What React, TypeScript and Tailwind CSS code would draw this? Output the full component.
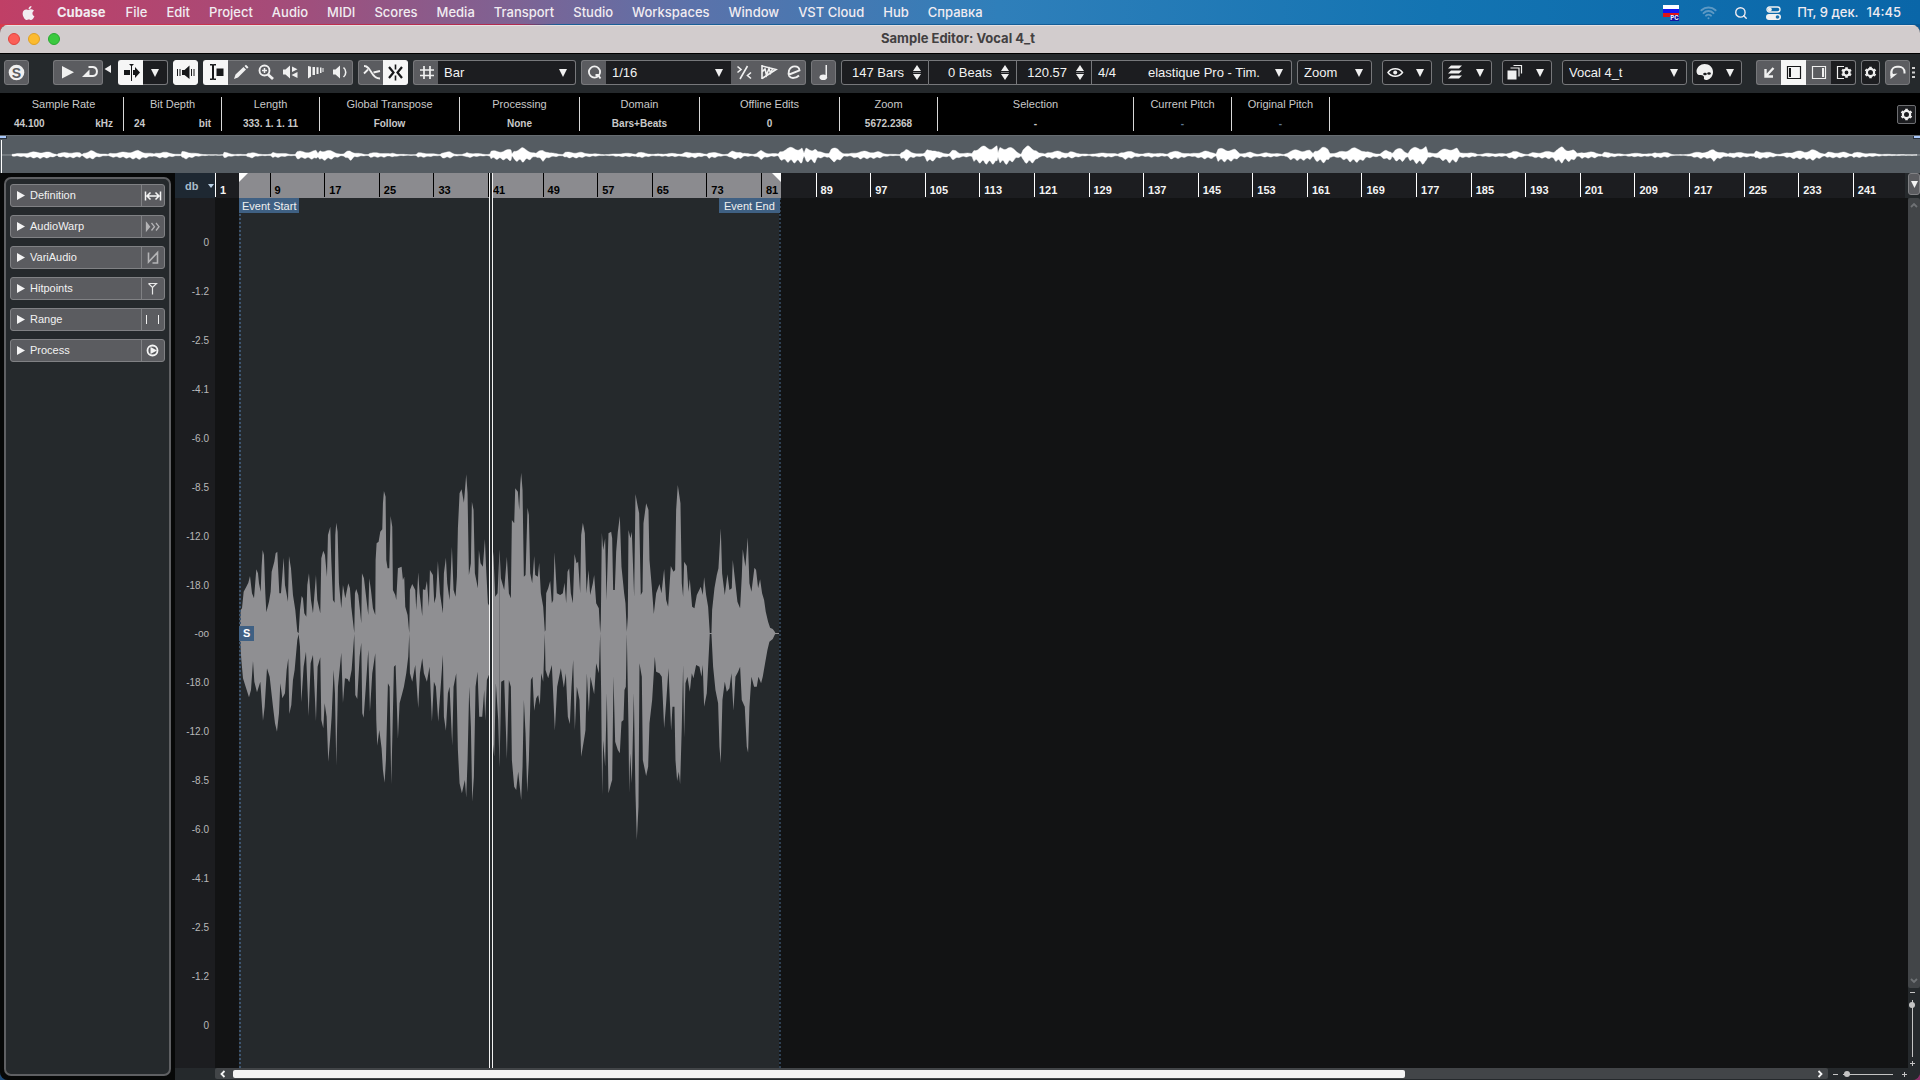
import React from "react";
import { FaApple } from "react-icons/fa";
import { Search, Wifi } from "lucide-react";

const MENU = [
  "File", "Edit", "Project", "Audio", "MIDI", "Scores", "Media", "Transport",
  "Studio", "Workspaces", "Window", "VST Cloud", "Hub", "Справка",
];

const INFO: { label: string; value: string; unit?: string; width: string; dim?: boolean }[] = [
  { label: "Sample Rate", value: "44.100", unit: "kHz", width: "w-[120px]" },
  { label: "Bit Depth", value: "24", unit: "bit", width: "w-[98px]" },
  { label: "Length", value: "333. 1. 1. 11", width: "w-[98px]" },
  { label: "Global Transpose", value: "Follow", width: "w-[140px]" },
  { label: "Processing", value: "None", width: "w-[120px]" },
  { label: "Domain", value: "Bars+Beats", width: "w-[120px]" },
  { label: "Offline Edits", value: "0", width: "w-[140px]" },
  { label: "Zoom", value: "5672.2368", width: "w-[98px]" },
  { label: "Selection", value: "-", width: "w-[196px]" },
  { label: "Current Pitch", value: "-", width: "w-[98px]", dim: true },
  { label: "Original Pitch", value: "-", width: "w-[98px]", dim: true },
];

const DB = ["0", "-1.2", "-2.5", "-4.1", "-6.0", "-8.5", "-12.0", "-18.0", "-oo", "-18.0", "-12.0", "-8.5", "-6.0", "-4.1", "-2.5", "-1.2", "0"];

const BARS = Array.from({ length: 31 }, (_, i) => 1 + i * 8);

/* Overview: x position and half height of the signal */
const OVERVIEW = "12:1 22:1.5 30:2.5 40:3 50:2.5 56:1 57:.3 58:1.5 70:2.7 80:2 82:.5 84:2.5 91:4 97:2 106:.8 108:.5 110:1.7 125:2.7 138:4 146:2.5 152:1.3 154:1 156:2 163:3 170:1.7 178:.8 181:.5 182:3 187:3.5 195:1.5 209:.2 223:.2 224:2.5 232:1 242:.5 246:.5 248:2.5 252:2.5 258:1 268:.5 271:.8 273:2.5 279:2 290:.7 295:.5 297:3.5 305:3 316:4 318:1.5 320:5 326:4.5 332:3.5 341:1 344:1 347:3.5 350:5 355:2 365:.7 368:.6 370:2 384:2 390:1 393:2 397:1 408:.3 416:.4 418:2 424:2 436:.8 440:.6 442:2.7 450:2.7 455:1 462:.5 465:1.2 467:2.5 474:1.5 487:.7 490:1 491:3.5 500:4 511:5 512:1 514:5 522:6.5 530:4 536:1.5 539:3.5 543:5.5 550:2 560:1 563:.7 565:2.5 580:2.7 585:1.5 590:1.5 604:.4 611:.7 620:1.5 633:1.5 636:1 638:2.5 644:2 654:.7 658:1 675:1.5 682:1 685:2.2 695:2.5 704:1 707:1 709:3 716:2 724:.6 728:1 732:3.5 740:3.5 743:1.5 753:1 756:1.5 761:4 768:1.7 778:1 780:4 785:6 794:7 802:7 804:1.5 806:6 812:6 815:7 818:3 826:2 829:2 831:6 838:6 844:1.5 849:1 853:2 860:3.5 875:3 878:3 884:1.5 893:.6 900:.6 901:3 906:5.5 911:2.5 923:1 925:2 927:5.5 931:6.5 937:3 947:1.5 949:1 952:4 956:4 960:2 972:1.5 974:6 985:8 997:8 998:2 1000:7 1008:8.5 1014:5 1021:1 1023:6 1028:8 1036:6 1039:2 1045:1 1048:3 1060:3.5 1068:2 1070:3 1080:1.5 1089:.5 1094:1.5 1110:2 1118:.7 1121:2.5 1126:4 1135:2 1143:1 1150:2 1167:1 1170:3.5 1180:3 1190:1 1195:2 1205:3.5 1213:3 1216:1 1218:5.5 1225:6 1235:5 1240:1.5 1250:2.5 1258:1 1266:2 1276:1.5 1284:.5 1290:4 1300:5 1310:4 1313:1.5 1315:5 1322:7 1328:6 1330:2 1337:2 1340:3 1350:6 1360:6.5 1366:3 1380:1 1386:4.5 1391:4 1392:2 1395:5 1402:6 1408:2 1410:5 1418:8 1426:8 1428:2 1436:2 1440:4 1450:7 1457:6 1460:2 1465:2.5 1475:1.5 1478:.5 1485:1.5 1500:1.5 1506:1 1508:2 1513:4 1520:2 1528:.5 1532:2 1545:3 1554:3.5 1556:6 1562:7 1566:5 1570:6 1573:5.5 1577:1.5 1580:2 1582:3 1595:2.5 1602:.7 1604:2.5 1615:1.5 1625:.5 1630:1.5 1640:1.5 1652:1 1655:2.5 1668:2 1674:.3 1684:.3 1700:3 1708:3 1714:5.5 1720:3 1728:1 1730:2.5 1745:2 1754:1 1756:3.5 1765:3 1778:1 1780:.8 1795:3.5 1805:3.5 1811:5 1818:3.5 1825:1 1828:2.5 1845:2.5 1852:1 1854:2.5 1870:1.5 1885:.7 1905:.3 1918:.3"
  .split(" ")
  .map((p) => p.split(":").map(Number));

/* Fill in the samples between the listed points with a little ripple */
const SAMPLES: [number, number, number][] = [];
for (let i = 0; i < OVERVIEW.length - 1; i++) {
  const [x0, a0] = OVERVIEW[i];
  const [x1, a1] = OVERVIEW[i + 1];
  for (let x = x0; x < x1; x++) {
    const a = a0 + ((a1 - a0) * (x - x0)) / (x1 - x0);
    const up = 0.95 + 0.25 * Math.sin(x * 12.9898);
    const down = 0.95 + 0.25 * Math.sin(x * 7.233 + 1);
    SAMPLES.push([x, a * up, a * down]);
  }
}

const overviewPath =
  "M" + SAMPLES.map(([x, up]) => `${x} ${(19.5 - up).toFixed(1)}`).join("L") +
  "L" + [...SAMPLES].reverse().map(([x, , down]) => `${x} ${(19.5 + down).toFixed(1)}`).join("L") + "Z";

/* Event signal: upper and lower outlines of its two halves */
const TOP_A = "30,520 33,450 37,445 42,395 50,380 56,368 61,348 67,400 73,415 80,328 85,340 88,370 93,395 96,318 99,270 103,285 107,400 110,457 118,425 123,395 126,335 134,305 138,280 143,275 149,400 154,400 162,293 166,375 175,425 178,288 184,325 190,405 197,450 203,515 207,520 211,450 216,408 220,415 224,460 230,470 233,375 238,340 244,420 250,460 259,345 263,420 272,460 275,295 281,272 286,285 292,350 295,225 302,200 305,300 310,420 315,428 317,225 320,188 324,215 328,370 335,445 340,375 347,415 356,370 361,385 365,440 373,510 374,519 376,400 380,387 386,405 391,450 395,490 397,340 403,355 410,415 416,465 419,355 424,390 430,445 437,465 438,300 441,250 447,245 452,215 458,208 460,130 463,93 468,110 470,300 474,325 479,325 483,168 488,200 490,390 497,405 500,420 505,325 516,320 520,360 524,350 527,440 534,465 539,519 541,390 548,372 557,390 560,450 566,337 570,400 578,468 580,388 587,390 592,363 598,440 601,330 610,345 614,430 619,410 625,303 631,400 640,460 643,340 649,293 653,370 660,420 667,260 672,390 678,410 682,350 685,205 690,100 696,88 703,128 707,80 710,43 714,100 718,345 724,310 727,125 732,150 736,340 745,385 748,270 753,310 760,320 766,237 770,330 775,430 780,440 786,440 789,262 792,290 797,410 804,400 810,268";
const BOTTOM_A = "30,520 35,600 40,655 48,680 58,712 64,690 70,603 74,665 82,697 92,665 100,782 105,740 112,625 120,650 130,740 136,790 142,815 148,760 152,670 158,715 166,700 171,630 176,595 179,762 185,735 190,660 195,630 203,540 207,522 211,560 215,727 222,620 229,575 237,768 243,610 250,585 259,783 264,620 272,592 275,780 281,805 285,730 291,770 296,905 302,830 306,770 312,630 316,700 320,917 325,680 335,578 340,728 346,655 354,657 359,667 366,630 372,550 374,522 377,705 383,717 390,590 395,548 398,760 402,773 408,690 416,570 421,755 428,640 437,580 440,780 443,857 449,810 456,865 460,930 465,968 469,900 475,670 480,680 485,973 489,800 493,620 498,615 505,837 510,730 518,700 523,680 530,640 536,590 539,522 541,640 548,665 557,615 566,745 571,640 578,595 583,640 592,665 600,620 607,785 613,665 619,680 626,785 632,700 640,585 643,770 649,812 655,700 660,680 668,857 672,680 680,640 685,870 690,970 697,1000 706,960 710,1013 714,900 719,680 724,800 728,1025 733,950 738,680 744,635 749,770 758,770 764,690 767,783 772,660 780,640 788,670 790,850 794,890 799,670 806,780 810,923";
const TOP_B = "0,268 4,355 14,390 22,290 28,400 34,415 37,180 44,190 47,85 55,95 59,150 62,75 65,38 69,90 73,350 78,345 84,143 88,165 92,340 98,370 104,288 107,345 115,350 119,308 124,400 131,440 136,515 138,510 140,400 146,385 152,363 157,430 161,420 165,277 172,400 182,405 190,400 195,368 200,430 204,335 209,325 214,400 220,430 225,282 231,310 236,305 242,400 245,225 250,188 256,220 261,400 267,330 272,405 280,370 284,345 290,430 298,445 302,519 304,480 307,218 311,270 317,235 321,420 327,220 335,215 338,235 341,390 346,390 350,275 355,215 361,168 366,320 374,400 378,430 382,515 385,470 387,210 393,235 397,215 404,410 408,102 414,135 419,160 424,405 429,395 432,190 440,130 447,150 450,300 457,380 463,462 470,400 480,372 486,400 494,327 500,420 506,440 514,318 522,335 527,330 530,150 535,75 543,130 547,370 551,410 554,305 562,318 567,395 571,357 578,440 585,445 592,405 604,380 610,405 614,352 620,405 626,440 631,519 636,519 638,450 645,385 652,345 657,325 664,205 668,340 676,405 684,343 690,390 697,385 700,300 709,380 714,425 722,445 727,350 730,268 738,320 745,232 750,370 756,395 765,323 770,330 776,385 782,358 788,400 794,420 799,455 806,485 812,503 820,507 826,515 828,519 843,519";
const BOTTOM_B = "0,923 5,665 14,660 22,897 28,660 34,680 37,900 44,980 50,990 56,935 65,1020 69,920 73,720 78,820 83,997 88,900 94,660 99,650 104,752 110,715 116,705 121,735 125,640 131,665 136,522 138,630 146,655 157,615 166,812 173,680 184,625 193,683 199,640 205,770 211,792 216,680 221,600 226,810 232,680 240,720 245,890 255,830 258,810 262,640 268,757 273,650 284,703 290,610 298,640 302,522 305,700 308,1005 311,840 317,920 322,700 327,1000 335,970 338,960 342,650 347,845 355,870 361,880 366,785 372,780 375,690 379,680 382,522 387,800 389,1000 392,880 397,970 403,700 408,1000 412,1140 417,1040 420,610 427,650 430,900 440,948 446,920 450,790 458,720 466,590 470,635 480,640 487,650 494,805 500,730 507,625 515,812 519,740 525,740 528,900 533,963 538,935 542,973 547,800 551,615 554,835 558,670 564,650 571,695 577,640 582,655 590,615 600,620 606,650 610,615 614,740 622,700 627,600 631,522 636,522 641,620 648,690 656,730 660,860 664,910 669,720 676,665 682,695 690,685 696,640 702,752 708,650 716,635 722,620 727,720 736,740 742,860 746,878 750,740 756,650 764,680 772,680 777,650 785,670 790,650 797,610 804,570 810,545 820,537 826,524 828,522 843,522";

const outline = (top: string, bottom: string) => `${top} ${bottom.split(" ").reverse().join(" ")}`;

/* ---------- toolbar parts ---------- */

function Icon({ children }: { children: React.ReactNode }) {
  return (
    <svg viewBox="0 0 25 25" width="25" height="25" className="shrink-0" fill="currentColor" stroke="none" aria-hidden="true">
      {children}
    </svg>
  );
}

type Tone = "gray" | "white" | "dark";
const TONE: Record<Tone, string> = {
  gray: "bg-[#5b5c60] border-[#77787b] text-[#f0f0f0]",
  white: "bg-[#f6f6f6] border-[#f6f6f6] text-[#17181a]",
  dark: "bg-[#1c1d20] border-[#77787b] text-[#f0f0f0]",
};

function Tool({ label, tone = "gray", narrow, children }: { label: string; tone?: Tone; narrow?: boolean; children: React.ReactNode }) {
  return (
    <button
      type="button"
      aria-label={label}
      className={`${TONE[tone]} ${narrow ? "w-[19px]" : "w-[25px]"} flex h-[25px] shrink-0 items-center justify-center overflow-hidden border-y first:rounded-l-[3px] first:border-l last:rounded-r-[3px] last:border-r`}
    >
      {children}
    </button>
  );
}

function Group({ children, className = "" }: { children: React.ReactNode; className?: string }) {
  return <div className={`flex shrink-0 ${className}`}>{children}</div>;
}

function Down() {
  return (
    <svg viewBox="0 0 8 8" width="8" height="8" fill="#f0f0f0" className="pointer-events-none shrink-0" aria-hidden="true">
      <path d="M0 0H8L4 8Z" />
    </svg>
  );
}

function Drop({ label, value, className }: { label: string; value: string; className: string }) {
  return (
    <label className={`${className} flex h-[25px] shrink-0 items-center border-y border-[#77787b] bg-[#1c1d20] pr-2 pl-[6px] first:rounded-l-[3px] first:border-l last:rounded-r-[3px] last:border-r`}>
      <select aria-label={label} className="min-w-0 flex-1 appearance-none bg-transparent text-[13px] text-[#f2f2f2] outline-none">
        <option>{value}</option>
      </select>
      <Down />
    </label>
  );
}

function Stepper({ label, value, className }: { label: string; value: string; className: string }) {
  return (
    <div className={`${className} flex h-[25px] shrink-0 items-center gap-[9px] border-y border-r border-[#77787b] bg-[#1c1d20] pr-[7px] first:rounded-l-[3px] first:border-l`}>
      <input aria-label={label} defaultValue={value} className="min-w-0 flex-1 bg-transparent text-right text-[13px] text-[#f2f2f2] outline-none" />
      <div className="flex w-2 flex-col gap-px">
        <button type="button" aria-label={`${label} up`} className="h-[6px]">
          <svg viewBox="0 0 8 6" width="8" height="6" fill="#f0f0f0"><path d="M4 0L8 6H0Z" /></svg>
        </button>
        <span className="h-px bg-[#77787b]" />
        <button type="button" aria-label={`${label} down`} className="h-[6px]">
          <svg viewBox="0 0 8 6" width="8" height="6" fill="#f0f0f0"><path d="M0 0H8L4 6Z" /></svg>
        </button>
      </div>
    </div>
  );
}

function Gear({ cx, cy, r = 3.6 }: { cx: number; cy: number; r?: number }) {
  return (
    <g fill="none" stroke="currentColor">
      <circle cx={cx} cy={cy} r={r} strokeWidth="2.2" />
      {[30, 90, 150, 210, 270, 330].map((a) => (
        <path key={a} d={`M${cx + r + 0.6} ${cy}h1.6`} strokeWidth="2.6" transform={`rotate(${a} ${cx} ${cy})`} />
      ))}
    </g>
  );
}

const Speaker = () => <path d="M5 9.5H7.5L12 5.5V18.5L7.5 14.5H5Z" />;

function MenuButton({ label, children, className = "" }: { label: string; children: React.ReactNode; className?: string }) {
  return (
    <Group className={className}>
      <button type="button" aria-label={label} className="flex h-[25px] w-[50px] items-center justify-between overflow-hidden rounded-[3px] border border-[#77787b] bg-[#1c1d20] pr-[7px] text-[#f0f0f0]">
        {children}
        <Down />
      </button>
    </Group>
  );
}

function Toolbar() {
  return (
    <div className="flex h-[39px] shrink-0 items-center gap-[5px] overflow-hidden bg-[#25292c] pb-[2px] pl-1">
      <Group>
        <Tool label="Solo editor">
          <Icon>
            <circle cx="12.5" cy="12.5" r="7.8" />
            <text x="12.5" y="17.5" textAnchor="middle" fontSize="14" fontWeight="700" fill="#5b5c60">S</text>
          </Icon>
        </Tool>
      </Group>
      <Group className="ml-[19px]">
        <Group>
          <Tool label="Audition"><Icon><path d="M8 6L20 12.3L8 18.6Z" /></Icon></Tool>
          <Tool label="Audition loop">
            <Icon>
              <path d="M8 16H15A4.6 4.6 0 0 0 15 6.9H10.5" fill="none" stroke="currentColor" strokeWidth="2" />
              <path d="M4 17L11.5 9.5V17Z" />
            </Icon>
          </Tool>
        </Group>
        <svg viewBox="0 0 10 25" width="10" height="25" fill="#f0f0f0" aria-hidden="true"><path d="M8 5V13L1.5 9Z" /></svg>
      </Group>
      <Group>
        <Tool label="Auto-scroll" tone="white">
          <Icon>
            <path d="M5 10H11V15H5ZM14 10H16V7L21 12.5L16 18V15H14ZM12 6L10 4H15L13 6V21H12Z" />
          </Icon>
        </Tool>
        <Tool label="Auto-scroll settings" tone="dark"><Down /></Tool>
      </Group>
      <Group>
        <Tool label="Acoustic feedback" tone="white">
          <Icon>
            <path d="M4 9H5V16H4ZM6.5 9H7.5V16H6.5ZM9 10H11.5L16.5 5.5V19L11.5 15H9ZM18 9H19V16H18ZM20.5 9H21.5V16H20.5Z" />
          </Icon>
        </Tool>
      </Group>
      <Group>
        <Tool label="Range selection" tone="white">
          <Icon>
            <path d="M6 4H8.5L9 4.6L9.5 4H12V5.5H10V18.5H12V20H9.5L9 19.4L8.5 20H6V18.5H8V5.5H6ZM12.5 8.5H19.5V16H12.5Z" />
          </Icon>
        </Tool>
        <Tool label="Draw"><Icon><path d="M6 19L7.5 14.5L15.5 7L18 9.5L10 17.5ZM16.5 6L18 4.8L20.5 7.2L19 8.7Z" /></Icon></Tool>
        <Tool label="Zoom">
          <Icon>
            <g fill="none" stroke="currentColor" strokeWidth="1.9">
              <circle cx="11.5" cy="10.5" r="5" />
              <path d="M9 10.5H14M11.5 8V13" strokeWidth="1.5" />
              <path d="M15 14.5L20 19" strokeWidth="2.8" />
            </g>
          </Icon>
        </Tool>
        <Tool label="Play"><Icon><Speaker /><path d="M14 6.5L19.5 9.2L14 12ZM19.5 12V18L13.5 15Z" /></Icon></Tool>
        <Tool label="Scrub"><Icon><path d="M5 6L8 6.7V16.5L5 18.5ZM9.5 7H12V15H9.5ZM13.5 7.2H15.5V14H13.5ZM17 7.5H18.5V13H17ZM19.5 8H20.5V12H19.5Z" /></Icon></Tool>
        <Tool label="Time warp">
          <Icon><Speaker /><path d="M15.5 7.5C18.5 10 18.5 14.5 15.5 17" fill="none" stroke="currentColor" strokeWidth="1.6" /></Icon>
        </Tool>
      </Group>
      <Group>
        <Tool label="Snap to zero crossing">
          <Icon>
            <g fill="none" stroke="currentColor" strokeWidth="1.8">
              <path d="M5 6C9 6 10.5 9 12.5 12.5S17 18.5 21 18.5" />
              <path d="M5 13.5L9 9.5M21 11L14.5 12.5" />
            </g>
          </Icon>
        </Tool>
        <Tool label="Snap on" tone="white">
          <Icon>
            <g fill="none" stroke="currentColor" strokeWidth="2.2">
              <path d="M6 7L10.5 12.5L6 18M19 7L14.5 12.5L19 18" />
              <path d="M12.5 4.5V9.5M12.5 15.5V20.5" strokeWidth="1.6" />
            </g>
          </Icon>
        </Tool>
      </Group>
      <Group>
        <Tool label="Grid"><Icon><path d="M10 6V19M16 6V19M6 10H20M6 15.5H20" fill="none" stroke="currentColor" strokeWidth="1.7" /></Icon></Tool>
        <Drop label="Grid type" value="Bar" className="w-[138px]" />
      </Group>
      <Group>
        <Tool label="Quantize">
          <Icon><g fill="none" stroke="currentColor" strokeWidth="1.8"><circle cx="12.5" cy="12" r="5.6" /><path d="M13.5 15H16L18.5 18.5" /></g></Icon>
        </Tool>
        <Drop label="Quantize preset" value="1/16" className="w-[125px]" />
        <Tool label="Soft quantize">
          <Icon><g fill="none" stroke="currentColor" strokeWidth="1.6"><path d="M16.5 6L9 19M6.5 6.5L10 9.5L6.5 12.5M20 12.5L16.5 15.5L20 18.5" /></g></Icon>
        </Tool>
        <Tool label="Audio quantize">
          <Icon>
            <path d="M6 6L20 9.5L6 18.5" fill="none" stroke="currentColor" strokeWidth="1.6" />
            <path d="M6 5V19M6 12L9 9L10.5 15L13 8.5L14.5 13L16.5 9" fill="none" stroke="currentColor" strokeWidth="1.6" />
          </Icon>
        </Tool>
        <Tool label="Quantize panel">
          <Icon><path d="M7 15L18.5 10.5C18 5 10 5 8 10.5C6.500 16 9 18 12 18S16.5 17 18 15.5" fill="none" stroke="currentColor" strokeWidth="1.9" /></Icon>
        </Tool>
      </Group>
      <Group>
        <Tool label="Musical mode"><Icon><ellipse cx="12.3" cy="17.2" rx="3.8" ry="2.8" /><path d="M14.5 5H16V17.5H14.5Z" /></Icon></Tool>
      </Group>
      <Group>
        <Stepper label="Bars" value="147 Bars" className="w-[88px]" />
        <Stepper label="Beats" value="0 Beats" className="w-[88px]" />
        <Stepper label="Tempo" value="120.57" className="w-[75px]" />
        <div className="flex h-[25px] w-[50px] items-center border-y border-[#77787b] bg-[#1c1d20] pl-[6px]">
          <input aria-label="Time signature" defaultValue="4/4" className="w-full bg-transparent text-[13px] text-[#f2f2f2] outline-none" />
        </div>
        <Drop label="Algorithm" value="elastique Pro - Tim." className="w-[150px]" />
      </Group>
      <Group><Drop label="Zoom preset" value="Zoom" className="w-[75px]" /></Group>
      <MenuButton label="Show info" className="ml-[5px]">
        <Icon>
          <path d="M5 12.5C8.500 7.500 16 7.500 19.500 12.500C16 17.500 8.500 17.500 5 12.500Z" fill="none" stroke="currentColor" strokeWidth="1.5" />
          <circle cx="12.200" cy="12.500" r="2" />
        </Icon>
      </MenuButton>
      <MenuButton label="Layers" className="ml-[5px]">
        <Icon><path d="M8 5.500H19L16 8.500H5ZM8 10.500H19L16 13.500H5ZM8 15.500H19L16 18.500H5Z" /></Icon>
      </MenuButton>
      <MenuButton label="Part borders" className="ml-[5px]">
        <Icon>
          <path d="M4.500 10.500H13.500V19.500H4.500Z" />
          <path d="M7.500 8H16V16.500M10.500 5.500H18.500V13.500" fill="none" stroke="currentColor" strokeWidth="1.200" />
        </Icon>
      </MenuButton>
      <Group className="ml-[5px]"><Drop label="Edited event" value="Vocal 4_t" className="w-[125px]" /></Group>
      <MenuButton label="Colours">
        <Icon>
          <path d="M11.500 4C16.500 4 20 7.500 20 12C20 16 17.500 19 14 20C11.500 20.500 10.500 19 11 17.500C11.500 16 9 14.500 7 15C4.500 15.500 3.500 13 3.500 11C4 7 7.500 4 11.500 4Z" />
          <ellipse cx="12" cy="14" rx="1.800" ry="1.300" fill="#1c1d20" />
          <ellipse cx="16" cy="13.500" rx="1.800" ry="1.300" fill="#1c1d20" />
        </Icon>
      </MenuButton>
      <Group className="ml-auto">
        <Tool label="Open in lower zone"><Icon><path d="M16.500 8L9.500 15.500M8.500 9V16.500H16" fill="none" stroke="currentColor" strokeWidth="2.400" /></Icon></Tool>
        <Tool label="Left zone" tone="white"><Icon><path d="M6.500 6.500H19.500V18.500H6.500Z" fill="none" stroke="currentColor" strokeWidth="1.200" /><path d="M8 8H10V17H8Z" /></Icon></Tool>
        <Tool label="Right zone"><Icon><path d="M6.500 6.500H19.500V18.500H6.500Z" fill="none" stroke="currentColor" strokeWidth="1.200" /><path d="M16 8H18V17H16Z" /></Icon></Tool>
        <Tool label="Window layout" tone="dark">
          <Icon><path d="M13 6.500H6.500V18.500H13" fill="none" stroke="currentColor" strokeWidth="1.200" /><Gear cx={15.500} cy={12.500} r={3} /></Icon>
        </Tool>
      </Group>
      <Group><Tool label="Toolbar setup" tone="dark" narrow><Icon><Gear cx={12.500} cy={12.500} /></Icon></Tool></Group>
      <Group>
        <Group>
          <Tool label="Retrospective">
            <Icon>
              <path d="M6.500 16V12A5.500 5.500 0 0 1 12 6.700H14A5.500 5.500 0 0 1 19.500 12V13.500" fill="none" stroke="currentColor" strokeWidth="2" />
              <path d="M5.500 11V19L12.500 13.500L8 14Z" />
            </Icon>
          </Tool>
        </Group>
        <svg viewBox="0 0 10 25" width="10" height="25" fill="#d0d0d0" aria-hidden="true">
          <path d="M2 7H5V9H2ZM2 11.500H5V13.500H2ZM2 16H5V18H2Z" />
        </svg>
      </Group>
    </div>
  );
}

/* ---------- inspector ---------- */

const SECTIONS: { name: string; icon: React.ReactNode }[] = [
  { name: "Definition", icon: <path d="M1.500 3.500V12.500M16.500 3.500V12.500M3 8H15M6.500 4.500L3 8L6.500 11.500M11.500 4.500L15 8L11.500 11.500" fill="none" stroke="#f4f4f4" strokeWidth="1.500" /> },
  { name: "AudioWarp", icon: <g stroke="#b4b4b6" fill="none" strokeWidth="1.300"><path d="M2.500 4L5.500 7.700L2.500 11.500Z" fill="#b4b4b6" /><path d="M7.500 4L10.500 7.700L7.500 11.500M12 4L15 7.700L12 11.500" /></g> },
  { name: "VariAudio", icon: <path d="M4.500 2.500V12L13.500 2.500V13H8.500" stroke="#b4b4b6" fill="none" strokeWidth="1.600" /> },
  { name: "Hitpoints", icon: <path d="M4.500 2.500H12.500L8.500 6.500L4.500 2.500M8.500 6.500V13.500" fill="none" stroke="#e8e8e8" strokeWidth="1.200" /> },
  { name: "Range", icon: <path d="M2 3H3V12H2ZM14 3H15V12H14Z" fill="#f0f0f0" /> },
  { name: "Process", icon: <g fill="none" stroke="#f4f4f4"><circle cx="8.500" cy="7.500" r="5" strokeWidth="1.800" /><path d="M6.500 4L13 7.500L6.500 11Z" fill="#f4f4f4" stroke="none" /></g> },
];

function Inspector() {
  return (
    <aside className="flex w-[175px] shrink-0 flex-col bg-[#070808] p-1">
      <div className="flex flex-1 flex-col gap-2 rounded-[7px] border-2 border-[#5f6063] bg-[#25292c] px-1 pt-[5px]">
        {SECTIONS.map((s) => (
          <button key={s.name} type="button" className="flex h-[23px] shrink-0 items-center rounded-[3px] border border-[#808184] bg-[#5b5c60] pl-[6px] text-left text-[11px] text-[#f2f2f2]">
            <svg viewBox="0 0 8 9" width="8" height="9" fill="#f4f4f4" aria-hidden="true"><path d="M0 0L8 4.500L0 9Z" /></svg>
            <span className="flex-1 pl-[5px]">{s.name}</span>
            <span className="flex h-full w-[23px] items-center justify-center border-l border-[#808184]">
              <svg viewBox="0 0 18 15" width="18" height="15" aria-hidden="true">{s.icon}</svg>
            </span>
          </button>
        ))}
      </div>
    </aside>
  );
}

/* ---------- editor ---------- */

function Timeline() {
  return (
    <div className="relative flex min-w-0 flex-1 flex-col">
      <div className="relative h-[25px] shrink-0 bg-[#25292c] pr-[3px]">
        <div className="relative h-full bg-[#1c1d20]">
          <div className="absolute inset-y-0 left-[1.42%] flex w-[32.06%] justify-between bg-[#8b8b8f]">
            <svg viewBox="0 0 9 9" width="9" height="9" fill="#fff"><path d="M0 0H9L0 9Z" /></svg>
            <svg viewBox="0 0 9 9" width="9" height="9" fill="#fff"><path d="M0 0H9V9Z" /></svg>
          </div>
          <div className="relative flex h-6 text-[11px] font-bold">
            {BARS.map((b, i) => (
              <div
                key={b}
                className={`${i > 0 && i < 11 ? "border-black text-black" : "border-white text-[#f4f4f4]"} ${i === 30 ? "grow-[0.95]" : "grow"} flex min-w-0 basis-0 items-end overflow-hidden border-l pl-1 leading-[14px]`}
              >
                {b}
              </div>
            ))}
          </div>
        </div>
      </div>
      <div className="relative min-h-0 flex-1 bg-[#121314]">
        <div className="absolute inset-y-0 left-[1.42%] w-[32%] bg-[#25292c]">
          <svg viewBox="0 -786 1626 2610" preserveAspectRatio="none" className="absolute inset-0 h-full w-full" fill="#8f8f92" aria-label="Vocal 4_t waveform">
            <polygon points={outline(TOP_A, BOTTOM_A)} transform="translate(-28 0)" />
            <polygon points={outline(TOP_B, BOTTOM_B)} transform="translate(782 0)" />
          </svg>
          <div className="absolute inset-y-0 left-0 w-[2px] bg-[repeating-linear-gradient(180deg,#3d5570_0_2px,transparent_2px_4px)]" />
          <div className="absolute inset-y-0 right-0 w-[2px] bg-[repeating-linear-gradient(180deg,#2e4053_0_2px,#121314_2px_4px)]" />
          <div className="relative flex h-[15px] justify-between text-[11px] leading-4 text-[#f0f0f0]">
            <span className="bg-[#3f6083] px-[3px]">Event Start</span>
            <span className="mr-px bg-[#3f6083] px-[5px]">Event End</span>
          </div>
          <div className="pointer-events-none absolute inset-0 flex items-center">
            <span className="h-[15px] w-[15px] bg-[#3f6083] pl-1 text-[11px] leading-[15px] font-bold text-white">S</span>
          </div>
        </div>
      </div>
      <div className="absolute inset-y-0 left-[16.18%] w-1 border-x border-[#f2f2f2] bg-[#25292c]" />
    </div>
  );
}

const RANGE_H =
  "h-[10px] w-[50px] appearance-none bg-transparent [&::-webkit-slider-runnable-track]:h-px [&::-webkit-slider-runnable-track]:bg-[#c4c4c4] [&::-webkit-slider-thumb]:-mt-[3px] [&::-webkit-slider-thumb]:h-[6px] [&::-webkit-slider-thumb]:w-[6px] [&::-webkit-slider-thumb]:appearance-none [&::-webkit-slider-thumb]:rounded-full [&::-webkit-slider-thumb]:bg-[#c4c4c4]";
const RANGE_V =
  "h-[57px] w-[10px] appearance-none bg-transparent [writing-mode:vertical-lr] [&::-webkit-slider-runnable-track]:w-px [&::-webkit-slider-runnable-track]:bg-[#c4c4c4] [&::-webkit-slider-thumb]:-ml-[3px] [&::-webkit-slider-thumb]:h-[6px] [&::-webkit-slider-thumb]:w-[6px] [&::-webkit-slider-thumb]:appearance-none [&::-webkit-slider-thumb]:rounded-full [&::-webkit-slider-thumb]:bg-[#c4c4c4]";

function Chevron({ d, color }: { d: string; color: string }) {
  return (
    <svg viewBox="0 0 8 8" width="8" height="8" fill="none" stroke={color} strokeWidth="1.800" aria-hidden="true">
      <path d={d} />
    </svg>
  );
}

function Mark({ plus }: { plus?: boolean }) {
  return (
    <svg viewBox="0 0 5 5" width="5" height="5" fill="#c4c4c4" aria-hidden="true">
      <path d={plus ? "M0 2H5V3H0ZM2 0H3V5H2Z" : "M0 2H5V3H0Z"} />
    </svg>
  );
}

function Editor() {
  return (
    <div className="flex min-h-0 flex-1">
      <Inspector />
      <div className="flex min-w-0 flex-1 flex-col">
        <div className="flex min-h-0 flex-1">
          <div className="flex w-10 shrink-0 flex-col bg-[#1c1d20]">
            <button type="button" className="flex h-[25px] shrink-0 items-center justify-between bg-[#1e2832] pt-px pr-px pl-[10px] text-[11px] font-bold text-[#a9bccb]">
              db
              <svg viewBox="0 0 6 4" width="6" height="4" fill="#b9d0e4" aria-hidden="true"><path d="M0 0H6L3 4Z" /></svg>
            </button>
            <div className="flex flex-1 flex-col pt-5 pr-[6px] pb-[18px] text-right text-[10px] text-[#b8b8ba]">
              {DB.map((d, i) => (
                <span key={i} className="flex flex-1 items-center justify-end">{d}</span>
              ))}
            </div>
          </div>
          <Timeline />
          <div className="flex w-3 shrink-0 flex-col bg-[#25292c]">
            <button type="button" aria-label="Ruler format" className="mb-[3px] flex h-[22px] items-center justify-center rounded-[3px] border border-[#808184] bg-[#5b5c60]">
              <svg viewBox="0 0 7 7" width="7" height="7" fill="#f4f4f4"><path d="M0 0H7L3.500 7Z" /></svg>
            </button>
            <div className="flex flex-1 flex-col items-center justify-between rounded-[2px] bg-[#424548] py-[3px]">
              <button type="button" aria-label="Scroll up"><Chevron d="M1 6L4 3L7 6" color="#6f7275" /></button>
              <button type="button" aria-label="Scroll down"><Chevron d="M1 2L4 5L7 2" color="#6f7275" /></button>
            </div>
            <div className="flex h-20 flex-col items-center justify-between py-[2px] pr-[3px]">
              <Mark />
              <input type="range" aria-label="Vertical zoom" defaultValue={5} className={RANGE_V} />
              <Mark plus />
            </div>
          </div>
        </div>
        <div className="flex h-3 shrink-0 bg-[#25292c] pl-10">
          <div className="flex h-[11px] min-w-0 flex-1 items-center rounded-[2px] bg-[#424548]">
            <button type="button" aria-label="Scroll left" className="flex w-[18px] justify-center pr-[2px]"><Chevron d="M5.500 1L2.500 4L5.500 7" color="#f4f4f4" /></button>
            <div className="flex h-2 flex-1"><div className="w-[74.2%] rounded-[2px] bg-[#f4f4f4]" /></div>
            <button type="button" aria-label="Scroll right" className="flex w-4 justify-center"><Chevron d="M2.500 1L5.500 4L2.500 7" color="#f4f4f4" /></button>
          </div>
          <div className="flex w-[92px] shrink-0 items-center gap-[5px] pl-[5px]">
            <Mark />
            <input type="range" aria-label="Horizontal zoom" defaultValue={2} className={RANGE_H} />
            <span className="ml-1"><Mark plus /></span>
          </div>
        </div>
      </div>
    </div>
  );
}

/* ---------- page ---------- */

function MenuBar() {
  return (
    <nav className="flex h-6 shrink-0 items-center bg-[linear-gradient(90deg,#c03f66_0%,#a64b78_14%,#7d6394_27%,#5b72aa_36%,#2f7fba_52%,#1374b2_75%,#0a66a8_100%)] pt-px pr-[19px] pl-[21px] font-[Inter,sans-serif] text-[13px] font-medium text-[#f1ecf1]">
      <FaApple className="h-4 w-[15px] shrink-0" />
      <ul className="ml-[21px] flex shrink-0 gap-[19px]">
        <li className="mr-px"><button type="button" className="font-bold">Cubase</button></li>
        {MENU.map((m) => <li key={m}><button type="button">{m}</button></li>)}
      </ul>
      <div className="ml-auto flex shrink-0 items-center">
        <svg viewBox="0 0 16 16" width="16" height="16" className="mr-[21px]" aria-label="Input source">
          <path d="M0 0H16V4H0Z" fill="#fff" />
          <path d="M0 4H16V8H0Z" fill="#1414f0" />
          <path d="M0 8H16V12H0Z" fill="#e01414" />
          <path d="M7 10H16V16H7Z" fill="#1414a0" />
          <text x="11.500" y="15.200" fontSize="6" fontWeight="700" textAnchor="middle" fill="#fff">РС</text>
        </svg>
        <Wifi className="mr-[17px] h-[17px] w-[17px] opacity-35" strokeWidth={2.8} />
        <Search className="mr-[18px] h-[14px] w-[14px]" strokeWidth={2.4} />
        <svg viewBox="0 0 15 14" width="15" height="14" className="mr-[16px]" aria-label="Control centre">
          <rect x="1" y="1" width="13" height="5" rx="2.500" fill="none" stroke="#f1f1f1" strokeWidth="1.400" />
          <circle cx="3.800" cy="3.500" r="2" fill="#f1f1f1" />
          <rect x="0" y="8" width="15" height="6" rx="3" fill="#f1f1f1" />
          <circle cx="11.500" cy="11" r="1.800" fill="#1a70ae" />
        </svg>
        <span>Пт, 9 дек.</span>
        <span className="ml-2">14:45</span>
      </div>
    </nav>
  );
}

export default function App() {
  return (
    <div className="flex h-screen w-full flex-col overflow-hidden font-['Liberation_Sans',Arial,sans-serif] [background:linear-gradient(90deg,#d83a4c_0%,#b02a50_27%,#1c5f96_29%,#0a5a98_100%)_top/100%_50%_no-repeat,linear-gradient(90deg,#1d4a78,#8a2f68)]">
      <MenuBar />
      <main className="mt-px flex min-h-0 flex-1 flex-col overflow-hidden rounded-lg bg-[#25292c]">
        <header className="flex h-7 shrink-0 items-center border-t border-[#e6e1e2] bg-[#d2cccd] pb-px pl-2">
          <div className="flex flex-1 gap-2">
            <button type="button" aria-label="Close" className="h-3 w-3 rounded-full border border-[#e0443e] bg-[#fb5f57]" />
            <button type="button" aria-label="Minimise" className="h-3 w-3 rounded-full border border-[#dfa023] bg-[#fcbb2f]" />
            <button type="button" aria-label="Zoom window" className="h-3 w-3 rounded-full border border-[#2aa833] bg-[#3bc93f]" />
          </div>
          <h1 className="font-[Inter,sans-serif] text-[13px] font-bold text-[#424041]">Sample Editor: Vocal 4_t</h1>
          <div className="mr-3 flex-1" />
        </header>
        <div className="h-px shrink-0 bg-black" />
        <Toolbar />
        <section className="flex h-[42px] shrink-0 bg-black py-1 pl-1">
          {INFO.map((c) => (
            <div key={c.label} className={`${c.width} flex shrink-0 flex-col justify-between border-r border-[#d8d8d8] pt-px pb-px text-center text-[#c9c9c9]`}>
              <span className="text-[11px] leading-[13px]">{c.label}</span>
              <span className={`${c.unit ? "justify-between" : "justify-center"} ${c.dim ? "text-[#5d7896]" : ""} flex px-[10px] text-[10px] leading-3 font-bold whitespace-nowrap`}>
                <span>{c.value}</span>
                {c.unit && <span>{c.unit}</span>}
              </span>
            </div>
          ))}
          <div className="mr-1 ml-auto flex items-center">
            <button type="button" aria-label="Info line setup" className="flex h-[19px] w-[19px] items-center justify-center overflow-hidden rounded-[2px] border border-[#6d6e71] bg-[#1c1d20] text-[#f0f0f0]">
              <Icon><Gear cx={12.5} cy={12.5} /></Icon>
            </button>
          </div>
        </section>
        <section className="relative h-[38px] shrink-0 border-t border-[#666c71] bg-[#555c62]">
          <svg viewBox="0 0 1920 38" preserveAspectRatio="none" className="h-full w-full" aria-label="Overview">
            <path d="M2 19.500H1920" stroke="#90969a" strokeWidth="1" />
            <path d={overviewPath} fill="#fff" stroke="#fff" strokeWidth="0.400" />
          </svg>
          <div className="absolute top-1 bottom-0 left-px w-px bg-white" />
          <div className="absolute top-0 left-0 h-[3px] w-[7px] border-r border-b border-[#28303c] bg-[#a9c8fb]" />
          <div className="absolute top-0 right-0 h-[3px] w-[7px] border-b border-l border-[#28303c] bg-[#a9c8fb]" />
        </section>
        <Editor />
      </main>
    </div>
  );
}
